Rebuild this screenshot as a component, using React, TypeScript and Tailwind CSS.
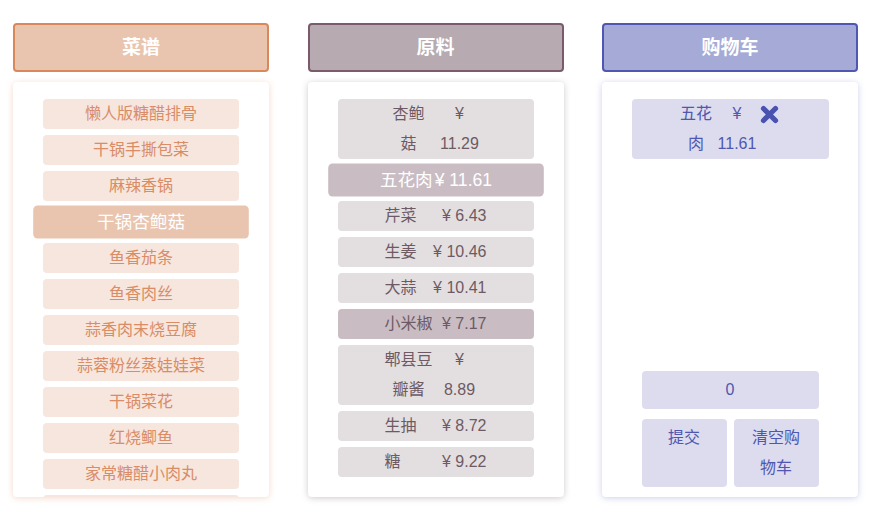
import React from "react";

const FONT = { fontFamily: '"Liberation Sans", "Noto Sans CJK SC", sans-serif' };

const recipes = [
  "懒人版糖醋排骨",
  "干锅手撕包菜",
  "麻辣香锅",
  "干锅杏鲍菇",
  "鱼香茄条",
  "鱼香肉丝",
  "蒜香肉末烧豆腐",
  "蒜蓉粉丝蒸娃娃菜",
  "干锅菜花",
  "红烧鲫鱼",
  "家常糖醋小肉丸",
  "",
];

type Ing = { name: string; price: string; wrapName?: string[]; wrapPrice?: string[]; state?: "active" | "hover" };
const ingredients: Ing[] = [
  { name: "杏鲍菇", price: "¥ 11.29", wrapName: ["杏鲍", "菇"], wrapPrice: ["¥", "11.29"] },
  { name: "五花肉", price: "¥ 11.61", state: "active" },
  { name: "芹菜", price: "¥ 6.43" },
  { name: "生姜", price: "¥ 10.46" },
  { name: "大蒜", price: "¥ 10.41" },
  { name: "小米椒", price: "¥ 7.17", state: "hover" },
  { name: "郫县豆瓣酱", price: "¥ 8.89", wrapName: ["郫县豆", "瓣酱"], wrapPrice: ["¥", "8.89"] },
  { name: "生抽", price: "¥ 8.72" },
  { name: "糖", price: "¥ 9.22" },
];

function Header({ title, cls }: { title: string; cls: string }) {
  return (
    <div className={`h-[49px] rounded-[4px] border-2 flex items-center justify-center pt-[1px] text-white font-bold text-[19px] ${cls}`}>
      {title}
    </div>
  );
}

function XIcon() {
  return (
    <svg width="21" height="21" viewBox="0 0 21 21" className="block">
      <path d="M4.5 4.5 L16.5 16.5 M16.5 4.5 L4.5 16.5" stroke="#4a52b0" strokeWidth="5.2" strokeLinecap="round" fill="none" />
    </svg>
  );
}

export default function App() {
  return (
    <div className="w-[894px] h-[524px] bg-white flex pl-[13px] pt-[23px] gap-[38.5px]" style={FONT}>
      {/* Column 1 */}
      <div className="w-[256px] flex flex-col gap-[10px]">
        <Header title="菜谱" cls="bg-[#e9c5b0] border-[#d9885c]" />
        <div className="h-[415px] rounded-[4px] bg-white overflow-hidden shadow-[0_1px_6px_rgba(233,170,140,0.45)] pt-[17px] flex flex-col items-center gap-[6px]">
          {recipes.map((r, i) => (
            <div
              key={i}
              className={`w-[196px] h-[30px] shrink-0 rounded-[4px] flex items-center justify-center text-[16px] ${
                i === 3 ? "bg-[#e9c5b0] text-white scale-110" : "bg-[#f6e6de] text-[#d98c66]"
              }`}
            >
              {r}
            </div>
          ))}
        </div>
      </div>

      {/* Column 2 */}
      <div className="w-[256px] flex flex-col gap-[10px]">
        <Header title="原料" cls="bg-[#b8aab1] border-[#7a5b6b]" />
        <div className="h-[415px] rounded-[4px] bg-white overflow-hidden shadow-[0_1px_6px_rgba(120,100,110,0.35)] pt-[17px] flex flex-col items-center gap-[6px]">
          {ingredients.map((it, i) => {
            const bg =
              it.state === "active"
                ? "bg-[#c9bcc3] text-white scale-110"
                : it.state === "hover"
                ? "bg-[#c9bcc3] text-[#6e5a64]"
                : "bg-[#e3dfe1] text-[#6e5a64]";
            return (
              <div key={i} className={`w-[196px] shrink-0 rounded-[4px] flex justify-center text-[16px] leading-[30px] ${bg}`}>
                {it.wrapName ? (
                  <div className="w-[102px] flex">
                    <div className="w-[48px] text-center">
                      {it.wrapName.map((l, j) => (
                        <div key={j}>{l}</div>
                      ))}
                    </div>
                    <div className="w-[54px] text-center">
                      {it.wrapPrice!.map((l, j) => (
                        <div key={j}>{l}</div>
                      ))}
                    </div>
                  </div>
                ) : (
                  <div className="w-[102px] flex justify-between whitespace-nowrap">
                    <span>{it.name}</span>
                    <span>{it.price}</span>
                  </div>
                )}
              </div>
            );
          })}
        </div>
      </div>

      {/* Column 3 */}
      <div className="w-[256px] flex flex-col gap-[10px]">
        <Header title="购物车" cls="bg-[#a5aad6] border-[#4f57b0]" />
        <div className="h-[415px] rounded-[4px] bg-white overflow-hidden shadow-[0_1px_6px_rgba(110,120,200,0.35)] pt-[17px] pb-[10px] flex flex-col items-center text-[#4f57b0]">
          <div className="w-[197px] rounded-[4px] bg-[#dcdcee] flex justify-center text-[16px] leading-[30px]">
            <div className="flex items-start">
              <div className="w-[32px] text-center">
                <div>五花</div>
                <div>肉</div>
              </div>
              <div className="w-[44px] ml-[3px] text-center">
                <div>¥</div>
                <div>11.61</div>
              </div>
              <div className="h-[30px] ml-[0px] flex items-center">
                <XIcon />
              </div>
            </div>
          </div>
          <div className="flex-1" />
          <div className="w-[177px] h-[38px] rounded-[4px] bg-[#dcdcee] flex items-center justify-center text-[16px]">0</div>
          <div className="w-[177px] mt-[10px] flex gap-[7px] text-[16px] leading-[30px]">
            <div className="flex-1 rounded-[4px] bg-[#dcdcee] py-[4px] text-center">提交</div>
            <div className="flex-1 rounded-[4px] bg-[#dcdcee] py-[4px] text-center">
              <div>清空购</div>
              <div>物车</div>
            </div>
          </div>
        </div>
      </div>
    </div>
  );
}
